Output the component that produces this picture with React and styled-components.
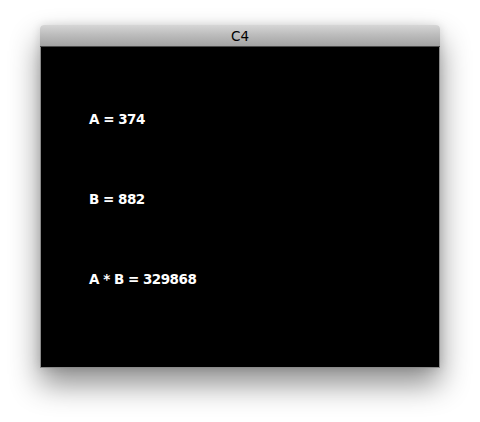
import React from "react";
import styled, { createGlobalStyle } from "styled-components";

const GlobalStyle = createGlobalStyle`
  html, body {
    margin: 0;
    padding: 0;
    background: #ffffff;
  }
`;

const Page = styled.div`
  width: 480px;
  height: 422px;
  padding: 25px 0 0 40px;
  box-sizing: border-box;
`;

const Window = styled.div`
  width: 400px;
  display: flex;
  flex-direction: column;
  border-radius: 4px 4px 0 0;
  box-shadow: 0 16px 30px rgba(0, 0, 0, 0.45), 0 0 10px rgba(0, 0, 0, 0.12);
`;

const TitleBar = styled.div`
  height: 21px;
  display: flex;
  align-items: center;
  justify-content: center;
  border-radius: 4px 4px 0 0;
  background: linear-gradient(#d6d6d6, #bdbdbd 45%, #a3a3a3);
  border-bottom: 1px solid #4a4a4a;
  font-family: "DejaVu Sans", "Liberation Sans", sans-serif;
  font-size: 13.5px;
  color: #000;
`;

const Content = styled.div`
  height: 321px;
  background: #000;
  border: 1px solid #8a8a8a;
  border-top: none;
  box-sizing: border-box;
  padding: 62px 0 0 48px;
  display: flex;
  flex-direction: column;
  gap: 60px;
`;

const Line = styled.div`
  height: 20px;
  line-height: 20px;
  font-family: "DejaVu Sans", "Liberation Sans", sans-serif;
  font-weight: bold;
  font-size: 13.5px;
  letter-spacing: -0.5px;
  color: #fff;
`;

export default function App() {
  const a = 374;
  const b = 882;
  return (
    <>
      <GlobalStyle />
      <Page>
        <Window>
          <TitleBar>C4</TitleBar>
          <Content>
            <Line>A = {a}</Line>
            <Line>B = {b}</Line>
            <Line>A * B = {a * b}</Line>
          </Content>
        </Window>
      </Page>
    </>
  );
}
